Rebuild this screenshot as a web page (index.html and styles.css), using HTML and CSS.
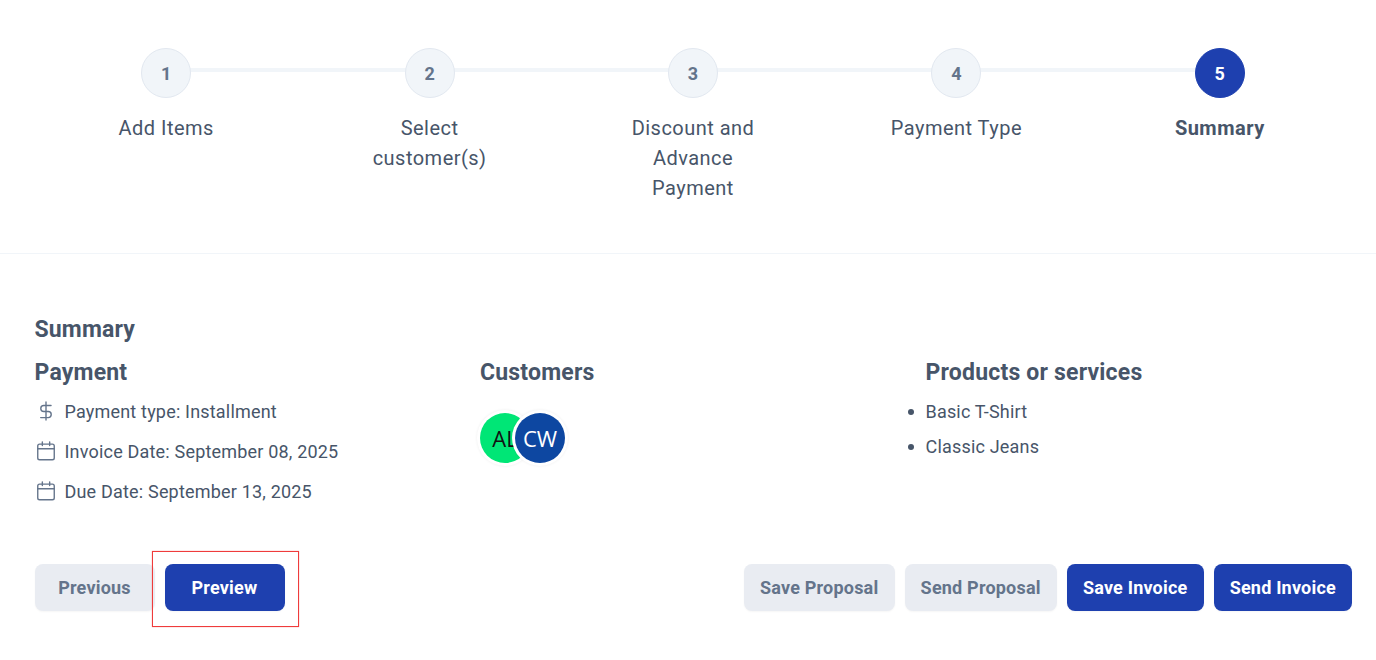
FILE: index.html
```html
<!DOCTYPE html>
<html lang="en">
<head>
    <meta charset="UTF-8">
    <title>Summary</title>
    <link rel="stylesheet" href="styles.css">
</head>
<body>
    <div class="stepper">
        <div class="step step-line">
            <div class="step-num">1</div>
            <div class="step-label">Add Items</div>
        </div>
        <div class="step step-line">
            <div class="step-num">2</div>
            <div class="step-label">Select<br>customer(s)</div>
        </div>
        <div class="step step-line">
            <div class="step-num">3</div>
            <div class="step-label">Discount and<br>Advance<br>Payment</div>
        </div>
        <div class="step step-line">
            <div class="step-num">4</div>
            <div class="step-label">Payment Type</div>
        </div>
        <div class="step step-active">
            <div class="step-num">5</div>
            <div class="step-label">Summary</div>
        </div>
    </div>

    <div class="content">
        <h2 class="page-title">Summary</h2>
        <div class="columns">
            <div class="col">
                <h3>Payment</h3>
                <div class="info-row">
                    <svg class="info-icon" viewBox="0 0 24 24" fill="none" stroke="currentColor" stroke-width="1.5" stroke-linecap="round" stroke-linejoin="round">
                        <path d="M12 2.2v19.6"/>
                        <path d="M17.5 6H9.6a3.3 3.3 0 0 0 0 6.6h4.8a3.3 3.3 0 0 1 0 6.6H6.2"/>
                    </svg>
                    <span>Payment type: Installment</span>
                </div>
                <div class="info-row">
                    <svg class="info-icon" viewBox="0 0 24 24" fill="none" stroke="currentColor" stroke-width="1.5" stroke-linecap="round" stroke-linejoin="round">
                        <rect x="3" y="4.5" width="18" height="17" rx="2"/>
                        <path d="M8 2v4M16 2v4M3 9.5h18"/>
                    </svg>
                    <span>Invoice Date: September 08, 2025</span>
                </div>
                <div class="info-row">
                    <svg class="info-icon" viewBox="0 0 24 24" fill="none" stroke="currentColor" stroke-width="1.5" stroke-linecap="round" stroke-linejoin="round">
                        <rect x="3" y="4.5" width="18" height="17" rx="2"/>
                        <path d="M8 2v4M16 2v4M3 9.5h18"/>
                    </svg>
                    <span>Due Date: September 13, 2025</span>
                </div>
            </div>
            <div class="col">
                <h3>Customers</h3>
                <div class="avatars">
                    <div class="avatar avatar-green">AL</div>
                    <div class="avatar avatar-blue">CW</div>
                </div>
            </div>
            <div class="col">
                <h3>Products or services</h3>
                <ul class="products">
                    <li>Basic T-Shirt</li>
                    <li>Classic Jeans</li>
                </ul>
            </div>
        </div>

        <div class="actions">
            <div class="btn-group">
                <button class="btn btn-grey">Previous</button>
                <button class="btn btn-blue">Preview</button>
                <div class="highlight"></div>
            </div>
            <div class="btn-group">
                <button class="btn btn-grey">Save Proposal</button>
                <button class="btn btn-grey">Send Proposal</button>
                <button class="btn btn-blue">Save Invoice</button>
                <button class="btn btn-blue">Send Invoice</button>
            </div>
        </div>
    </div>
</body>
</html>
```

FILE: styles.css
```css
* {
    box-sizing: border-box;
}

html, body {
    margin: 0;
    height: 100%;
}

body {
    background-color: #fff;
    color: #475569;
    font-family: Roboto, "Liberation Sans", sans-serif;
    overflow: hidden;
}

.stepper {
    display: grid;
    grid-template-columns: repeat(5, 1fr);
    height: 254px;
    padding: 48px 24.5px 0 34.5px;
    border-bottom: 1px solid #f1f5f9;
}

.step {
    position: relative;
    display: flex;
    flex-direction: column;
    align-items: center;
    text-align: center;
}

.step-line::after {
    content: "";
    position: absolute;
    top: 20px;
    left: 50%;
    width: 100%;
    height: 4px;
    background-color: #f1f5f9;
}

.step-num {
    position: relative;
    z-index: 1;
    width: 50px;
    height: 50px;
    display: flex;
    align-items: center;
    justify-content: center;
    border: 1px solid #e2e8f0;
    border-radius: 50%;
    background-color: #f1f5f9;
    color: #64748b;
    font-size: 18px;
    font-weight: 700;
}

.step-label {
    margin-top: 15px;
    font-size: 20px;
    line-height: 30px;
    letter-spacing: 0.48px;
}

.step-active .step-num {
    border-color: #1e40af;
    background-color: #1e40af;
    color: #fff;
}

.step-active .step-label {
    font-weight: 700;
}

.content {
    padding: 62px 24px 0 34.5px;
}

.page-title {
    margin: 0;
    font-size: 23px;
    font-weight: 700;
    line-height: 28px;
    letter-spacing: 0.15px;
}

.columns {
    display: grid;
    grid-template-columns: 445.5px 445.5px 1fr;
    margin-top: 15px;
    height: 180px;
}

h3 {
    margin: 0 0 4px;
    font-size: 23px;
    font-weight: 700;
    line-height: 28px;
    letter-spacing: 0.2px;
}

.info-row {
    display: flex;
    align-items: center;
    gap: 8px;
    height: 40px;
    font-size: 18px;
    letter-spacing: 0.19px;
}

.info-icon {
    width: 22px;
    height: 22px;
    color: #64748b;
}

.avatars {
    display: flex;
    margin-top: 26px;
}

.avatar {
    width: 50px;
    height: 50px;
    display: flex;
    align-items: center;
    justify-content: center;
    border-radius: 50%;
    overflow: hidden;
    font-family: "Open Sans", sans-serif;
    font-size: 22px;
    box-shadow: 0 0 0 3px #fff, 0 0 3px 3px rgba(0, 0, 0, 0.07);
}

.avatar-green {
    background-color: #00e676;
    color: #111;
}

.avatar-blue {
    position: relative;
    margin-left: -15px;
    background-color: #0d47a1;
    color: #fff;
}

.products {
    margin: 7px 0 0;
    padding: 0;
    list-style: none;
    font-size: 18px;
    letter-spacing: 0.19px;
}

.products li {
    position: relative;
    line-height: 35px;
}

.products li::before {
    content: "";
    position: absolute;
    left: -18px;
    top: 15px;
    width: 6px;
    height: 6px;
    border-radius: 50%;
    background-color: #475569;
}

.actions {
    display: flex;
    justify-content: space-between;
    margin-top: 25px;
}

.btn-group {
    position: relative;
    display: flex;
    gap: 10px;
}

.btn {
    height: 47px;
    min-width: 120px;
    padding: 0 16.1px;
    border: 0;
    border-radius: 8px;
    font-family: Roboto, "Liberation Sans", sans-serif;
    font-size: 18px;
    font-weight: 700;
    letter-spacing: 0.2px;
    box-shadow: 0 1px 2px rgba(0, 0, 0, 0.04);
}

.btn-grey {
    background-color: #e9ecf2;
    color: #64748b;
}

.btn-blue {
    background-color: #1e40af;
    color: #fff;
}

.highlight {
    position: absolute;
    left: 117.5px;
    top: -13px;
    width: 147px;
    height: 76px;
    border: 1px solid #ef3b3b;
    box-shadow: 0 0 1px rgba(239, 59, 59, 0.6);
}
```
